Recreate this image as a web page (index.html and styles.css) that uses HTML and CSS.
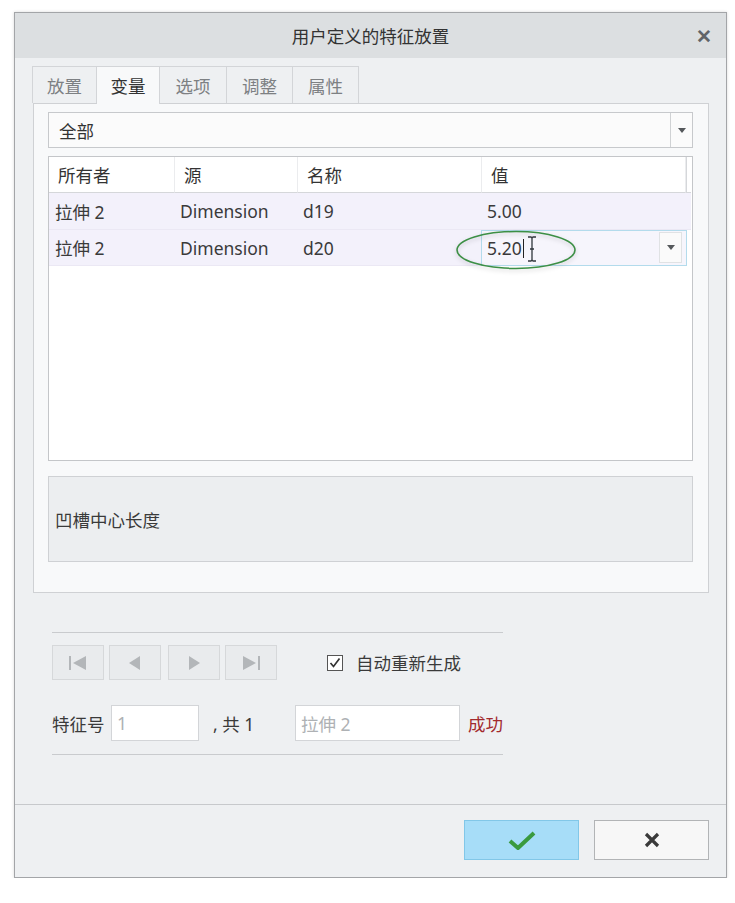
FILE: index.html
```html
<!DOCTYPE html>
<html>
  <head>
    <meta http-equiv="Content-Type" content="text/html; charset=UTF-8">
    <title>用户定义的特征放置</title>
    <link rel="stylesheet" href="styles.css">
  </head>

  <body>
    <div class="dialog">

      <div class="titlebar">
        <span class="title">用户定义的特征放置</span>
        <span class="close">&#x2715;</span>
      </div>

      <div class="content">
        <div class="tabs">
          <div class="tab t1">放置</div>
          <div class="tab t2 active">变量</div>
          <div class="tab t3">选项</div>
          <div class="tab t4">调整</div>
          <div class="tab t5">属性</div>
        </div>

        <div class="panel">
          <div class="select">
            <span class="select_text">全部</span>
            <span class="select_btn"><span class="arrow"></span></span>
          </div>

          <div class="grid">
            <div class="head">所有者</div>
            <div class="head">源</div>
            <div class="head">名称</div>
            <div class="head">值</div>
            <div class="head stub"></div>

            <div class="cell">拉伸 2</div>
            <div class="cell">Dimension</div>
            <div class="cell">d19</div>
            <div class="cell">5.00</div>
            <div class="cell"></div>

            <div class="cell">拉伸 2</div>
            <div class="cell">Dimension</div>
            <div class="cell">d20</div>
            <div class="cell editor">
              <span class="edit_text">5.20</span><span class="caret"></span>
              <svg class="ibeam" width="12" height="28" viewBox="0 0 12 28">
                <path d="M2 2 H5 Q6 2 6 4 V24 Q6 26 5 26 H2 M10 2 H7 Q6 2 6 4 M6 24 Q6 26 7 26 H10 M4 14 H8" fill="none" stroke="#30363c" stroke-width="1.3"/>
              </svg>
              <svg class="ring" width="126" height="46" viewBox="0 0 126 46">
                <ellipse cx="63" cy="22" rx="59" ry="18.5" fill="none" stroke="#3c8f45" stroke-width="1.6"/>
              </svg>
              <span class="cell_btn"><span class="arrow"></span></span>
            </div>
          </div>

          <div class="desc">凹槽中心长度</div>
        </div>

        <div class="nav">
          <div class="nav_buttons">
            <span class="navbtn">
              <svg width="24" height="16" viewBox="0 0 24 16"><rect x="3" y="1" width="2" height="14" fill="#b3b6b9"/><path d="M20 1 V15 L7 8 Z" fill="#b3b6b9"/></svg>
            </span>
            <span class="navbtn">
              <svg width="24" height="16" viewBox="0 0 24 16"><path d="M17 1 V15 L6 8 Z" fill="#b3b6b9"/></svg>
            </span>
            <span class="navbtn wide_gap">
              <svg width="24" height="16" viewBox="0 0 24 16"><path d="M7 1 V15 L18 8 Z" fill="#b3b6b9"/></svg>
            </span>
            <span class="navbtn">
              <svg width="24" height="16" viewBox="0 0 24 16"><path d="M4 1 V15 L17 8 Z" fill="#b3b6b9"/><rect x="19" y="1" width="2" height="14" fill="#b3b6b9"/></svg>
            </span>

            <label class="check">
              <span class="box">
                <svg width="14" height="14" viewBox="0 0 14 14"><path d="M2.5 7 L5.5 10.5 L11.5 2.5" fill="none" stroke="#333" stroke-width="1.7"/></svg>
              </span>
              自动重新生成
            </label>
          </div>

          <div class="feature_row">
            <span class="lbl">特征号</span>
            <span class="field num">1</span>
            <span class="total">, 共 1</span>
            <span class="field name">拉伸 2</span>
            <span class="ok_text">成功</span>
          </div>
        </div>
      </div>

      <div class="footer">
        <span class="btn btn_ok">
          <svg width="30" height="22" viewBox="0 0 30 22"><path d="M3 12 L11 19 L27 4" fill="none" stroke="#3a9a3e" stroke-width="4" stroke-linejoin="round"/></svg>
        </span>
        <span class="btn btn_cancel">
          <svg width="18" height="18" viewBox="0 0 18 18"><path d="M3 3 L15 15 M15 3 L3 15" stroke="#3a3a3a" stroke-width="3.2"/></svg>
        </span>
      </div>

    </div>
  </body>
</html>
```

FILE: styles.css
```css
body {
  margin: 0;
  background: #ffffff;
  font-family: "Noto Sans", "Noto Sans CJK SC", sans-serif;
  font-size: 17.5px;
  color: #3a3a3a;
}

.dialog {
  margin: 12px 0 0 14px;
  width: 711px;
  height: 864px;
  border: 1px solid #a3a5a8;
  background: #eef0f2;
  box-shadow: 0 0 3px rgba(0, 0, 0, 0.15);
  display: flex;
  flex-direction: column;
}

.titlebar {
  height: 45px;
  background: #dcdfe1;
  display: flex;
  align-items: center;
  justify-content: center;
  position: relative;
}

.title {
  font-size: 17.5px;
  color: #333;
}

.close {
  position: absolute;
  right: 14px;
  top: 10px;
  font-size: 19px;
  font-weight: bold;
  color: #606468;
}

.content {
  padding: 8px 17px 0 17px;
  flex: 1;
}

/* tabs */
.tabs {
  display: flex;
  height: 37px;
}

.tab {
  box-sizing: border-box;
  height: 37px;
  border: 1px solid #d3d5d8;
  border-bottom: none;
  border-left: none;
  display: flex;
  align-items: center;
  justify-content: center;
  color: #7d8083;
  background: #eef0f2;
}

.t1 { width: 65px; border-left: 1px solid #d3d5d8; }
.t2 { width: 63px; }
.t3 { width: 67px; }
.t4 { width: 66px; }
.t5 { width: 66px; }

.tab.active {
  background: #f8f9fa;
  color: #333;
  height: 38px;
  position: relative;
  z-index: 1;
}

.panel {
  margin-left: 1px;
  border: 1px solid #cfd1d4;
  background: #f8f9fa;
  height: 480px;
  padding: 8px 15px 0 14px;
}

.select {
  height: 36px;
  box-sizing: border-box;
  border: 1px solid #c7c9cc;
  background: #fbfbfb;
  display: flex;
  align-items: center;
}

.select_text {
  flex: 1;
  padding-left: 10px;
  color: #333;
}

.select_btn {
  width: 21px;
  height: 34px;
  border-left: 1px solid #d0d2d4;
  display: flex;
  align-items: center;
  justify-content: center;
}

.arrow {
  width: 0;
  height: 0;
  border-left: 4px solid transparent;
  border-right: 4px solid transparent;
  border-top: 5px solid #55585b;
}

/* table */
.grid {
  margin-top: 8px;
  height: 305px;
  box-sizing: border-box;
  border: 1px solid #c4c6c9;
  background: #ffffff;
  display: grid;
  grid-template-columns: 126px 123px 184px 204px 5px;
  grid-template-rows: 36px 37px 36px;
  align-content: start;
}

.head {
  border-bottom: 1px solid #d5d7da;
  border-right: 1px solid #ebecee;
  padding-left: 9px;
  display: flex;
  align-items: center;
  color: #333;
}

.head.stub {
  border-right: none;
  border-left: 1px solid #d5d7da;
  padding: 0;
}

.cell {
  background: #f3f1fb;
  border-bottom: 1px solid #ebe8f4;
  padding-left: 6px;
  display: flex;
  align-items: center;
  color: #3a3a3a;
}

.cell:nth-child(5n+2),
.cell:nth-child(5n+3),
.cell:nth-child(5n+4) {
  padding-left: 5px;
}

.cell:nth-child(5n) {
  padding: 0;
}

.editor {
  grid-column: 4 / span 2;
  position: relative;
  background: #f6f5fc;
  border: 1px solid #b3dbec;
  margin-left: -1px;
  margin-right: 4px;
}

.caret {
  display: inline-block;
  width: 1px;
  height: 19px;
  background: #222;
  margin-left: 1px;
}

.ibeam {
  position: absolute;
  left: 44px;
  top: 4px;
}

.ring {
  position: absolute;
  left: -29px;
  top: -3px;
  filter: drop-shadow(0 2px 2px rgba(0, 0, 0, 0.18));
}

.cell_btn {
  position: absolute;
  right: 4px;
  top: 1px;
  width: 21px;
  height: 29px;
  border: 1px solid #e0e2e4;
  background: #fafafa;
  display: flex;
  align-items: center;
  justify-content: center;
}

.desc {
  margin-top: 15px;
  height: 86px;
  box-sizing: border-box;
  border: 1px solid #cfd1d4;
  background: #eceef0;
  padding-left: 6px;
  display: flex;
  align-items: center;
  color: #3a3a3a;
}

/* navigation */
.nav {
  margin: 39px 0 0 20px;
  width: 451px;
  border-top: 1px solid #c9cbce;
  border-bottom: 1px solid #c9cbce;
  padding: 12px 0 13px 0;
}

.nav_buttons {
  display: flex;
  align-items: center;
  height: 35px;
}

.navbtn {
  width: 50px;
  height: 33px;
  border: 1px solid #d6d8da;
  background: #e9ebed;
  display: flex;
  align-items: center;
  justify-content: center;
  margin-right: 5px;
}

.navbtn.wide_gap {
  margin-left: 2px;
}

.check {
  margin-left: 45px;
  display: flex;
  align-items: center;
  color: #3a3a3a;
}

.box {
  width: 14px;
  height: 14px;
  border: 1px solid #555;
  background: #fff;
  margin-right: 13px;
  display: flex;
}

.feature_row {
  margin-top: 25px;
  display: flex;
  align-items: center;
  height: 36px;
}

.lbl {
  width: 59px;
  color: #3a3a3a;
}

.field {
  box-sizing: border-box;
  height: 36px;
  border: 1px solid #d3d5d8;
  background: #fff;
  color: #aeb1b4;
  padding-left: 5px;
  display: flex;
  align-items: center;
}

.field.num {
  width: 88px;
}

.total {
  margin-left: 14px;
  width: 82px;
}

.field.name {
  width: 165px;
}

.ok_text {
  margin-left: 8px;
  color: #a22a2e;
}

/* footer */
.footer {
  border-top: 1px solid #c7c9cc;
  height: 73px;
  box-sizing: border-box;
  padding: 15px 17px 0 0;
  display: flex;
  justify-content: flex-end;
  align-items: flex-start;
  gap: 15px;
}

.btn {
  width: 113px;
  height: 38px;
  display: flex;
  align-items: center;
  justify-content: center;
}

.btn_ok {
  background: #a7ddf8;
  border: 1px solid #82c7e8;
}

.btn_cancel {
  background: #f7f7f7;
  border: 1px solid #b2b4b6;
}
```
